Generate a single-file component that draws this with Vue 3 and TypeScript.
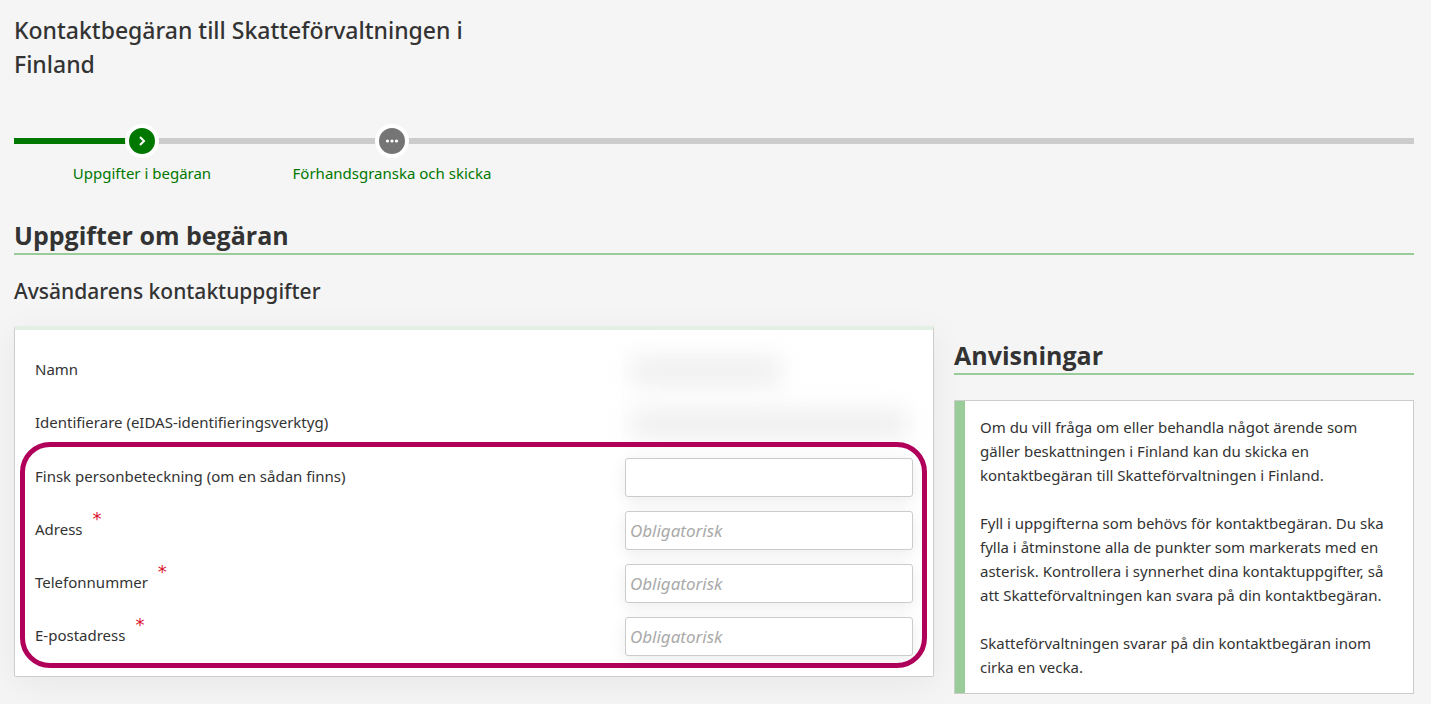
<script setup lang="ts">
interface Field {
  id: string
  label: string
  type: string
  required: boolean
}

const fields: Field[] = [
  { id: 'personbeteckning', label: 'Finsk personbeteckning (om en sådan finns)', type: 'text', required: false },
  { id: 'adress', label: 'Adress', type: 'text', required: true },
  { id: 'telefon', label: 'Telefonnummer', type: 'tel', required: true },
  { id: 'epost', label: 'E-postadress', type: 'email', required: true },
]

const instructions: string[] = [
  'Om du vill fråga om eller behandla något ärende som gäller beskattningen i Finland kan du skicka en kontaktbegäran till Skatteförvaltningen i Finland.',
  'Fyll i uppgifterna som behövs för kontaktbegäran. Du ska fylla i åtminstone alla de punkter som markerats med en asterisk. Kontrollera i synnerhet dina kontaktuppgifter, så att Skatteförvaltningen kan svara på din kontaktbegäran.',
  'Skatteförvaltningen svarar på din kontaktbegäran inom cirka en vecka.',
]
</script>

<template>
  <main class="page">
    <h1 class="title">Kontaktbegäran till Skatteförvaltningen i Finland</h1>

    <nav class="steps">
      <ol class="step-list">
        <li class="step current">
          <span class="dot">
            <svg viewBox="0 0 26 26" width="26" height="26" aria-hidden="true">
              <path d="M11 9l4 4-4 4" fill="none" stroke="#fff" stroke-width="2" />
            </svg>
          </span>
          <a href="#uppgifter" class="step-link">Uppgifter i begäran</a>
        </li>
        <li class="step">
          <span class="dot">
            <svg viewBox="0 0 26 26" width="26" height="26" aria-hidden="true">
              <g fill="#fff">
                <circle cx="8.5" cy="13" r="1.6" />
                <circle cx="13" cy="13" r="1.6" />
                <circle cx="17.5" cy="13" r="1.6" />
              </g>
            </svg>
          </span>
          <a href="#skicka" class="step-link">Förhandsgranska och skicka</a>
        </li>
      </ol>
    </nav>

    <h2 id="uppgifter" class="heading">Uppgifter om begäran</h2>
    <h3 class="subheading">Avsändarens kontaktuppgifter</h3>

    <div class="columns">
      <form class="card">
        <dl class="known">
          <div class="known-row">
            <dt>Namn</dt>
            <dd><span class="redacted short"></span></dd>
          </div>
          <div class="known-row">
            <dt>Identifierare (eIDAS-identifieringsverktyg)</dt>
            <dd><span class="redacted"></span></dd>
          </div>
        </dl>
        <div class="highlight">
          <div v-for="f in fields" :key="f.id" class="row">
            <label :for="f.id">{{ f.label }}<span v-if="f.required" class="star">*</span></label>
            <input :id="f.id" :type="f.type" :required="f.required" :placeholder="f.required ? 'Obligatorisk' : undefined" />
          </div>
        </div>
      </form>

      <aside class="aside">
        <h2 class="heading">Anvisningar</h2>
        <div class="note">
          <p v-for="(text, i) in instructions" :key="i">{{ text }}</p>
        </div>
      </aside>
    </div>
  </main>
</template>

<style>
body {
  margin: 0;
  background: #f5f5f5;
}
</style>

<style scoped>
.page {
  box-sizing: border-box;
  padding: 13px 17px 10px 14px;
  font-family: "Noto Sans", "Open Sans", sans-serif;
  font-size: 15px;
  line-height: 24px;
  color: #333;
}

h1, h2, h3, p, dl, dd, ol {
  margin: 0;
  padding: 0;
}

.title {
  max-width: 460px;
  font-size: 23px;
  line-height: 34px;
  font-weight: 500;
}

.steps {
  margin-top: 43px;
  background:
    linear-gradient(#007800, #007800) 0 14px / 120px 6px no-repeat,
    linear-gradient(#ccc, #ccc) 0 14px / 100% 6px no-repeat;
}

.step-list {
  display: flex;
  padding-left: 3px;
  list-style: none;
}

.step {
  width: 250px;
  display: flex;
  flex-direction: column;
  align-items: center;
  gap: 3px;
}

.dot {
  display: flex;
  border: 4px solid #fff;
  border-radius: 50%;
  background: #757575;
}

.current .dot {
  background: #007800;
}

.step-link {
  color: #007800;
  text-decoration: none;
}

.heading {
  padding-bottom: 2px;
  border-bottom: 2px solid #9c9;
  font-family: "Open Sans", "Noto Sans", sans-serif;
  font-size: 25px;
  line-height: 32px;
  font-weight: 700;
}

#uppgifter {
  margin-top: 34px;
}

.subheading {
  margin: 20px 0 19px;
  font-size: 21px;
  line-height: 32px;
  font-weight: 500;
}

.columns {
  display: grid;
  grid-template-columns: minmax(0, 2fr) minmax(0, 1fr);
  gap: 20px;
  align-items: start;
}

.card {
  padding-bottom: 8px;
  background: #fff;
  border: 1px solid #ccc;
  border-top: 4px solid #e4efe4;
  border-radius: 0 0 2px 2px;
  box-shadow: 0 8px 36px rgba(0, 0, 0, 0.06);
}

.known {
  display: grid;
  gap: 21px;
  padding: 23px 20px 4px;
  line-height: 32px;
}

.known-row,
.row {
  display: grid;
  grid-template-columns: minmax(0, 1fr) 288px;
  align-items: center;
}

.redacted {
  display: block;
  height: 28px;
  margin: 4px 6px 0;
  background: #eee;
  filter: blur(12px);
}

.short {
  width: 150px;
}

.highlight {
  position: relative;
  margin: 0 6px 0 5px;
  padding: 4px 9px 0 10px;
  border: 5px solid #b1005a;
  border-radius: 30px;
}

.row {
  height: 53px;
}

.row label {
  padding-bottom: 4px;
}

.star {
  margin-left: 10px;
  color: #d9142e;
  font-family: "DejaVu Sans", sans-serif;
  font-size: 18px;
  line-height: 0;
  vertical-align: 10px;
}

input {
  box-sizing: border-box;
  width: 100%;
  height: 39px;
  padding: 0 4px;
  border: 1px solid #ccc;
  border-radius: 3px;
  background: #fff;
  box-shadow: 0 4px 16px rgba(0, 0, 0, 0.08);
  font: inherit;
  font-size: 17px;
  color: #333;
}

input::placeholder {
  color: #aaa;
  font-style: italic;
  opacity: 1;
}

.aside {
  padding-top: 13px;
}

.note {
  display: grid;
  gap: 24px;
  margin-top: 25px;
  padding: 14px 20px 14px 25px;
  border: 1px solid #ccc;
  background: #fff;
  box-shadow: inset 10px 0 #9c9;
}
</style>
